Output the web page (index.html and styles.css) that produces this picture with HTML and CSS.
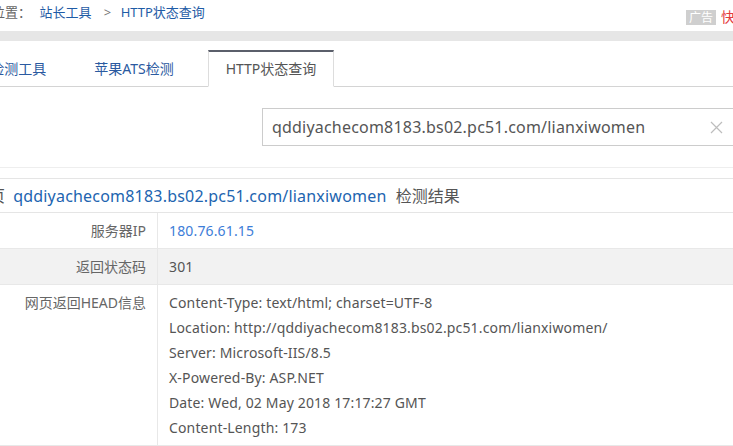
FILE: index.html
```html
<!DOCTYPE html>
<html lang="zh-CN">
<head>
  <meta charset="UTF-8">
  <meta name="viewport" content="width=device-width, initial-scale=1.0">
  <title>HTTP状态查询</title>
  <link rel="stylesheet" href="styles.css">
</head>
<body>
  <div class="wrap">
    <div class="crumb">
      <div class="crumb-left">
        <span class="crumb-label">当前位置：</span>
        <a href="#" class="crumb-link">站长工具</a>
        <span class="crumb-sep">&gt;</span>
        <a href="#" class="crumb-link">HTTP状态查询</a>
      </div>
      <div class="crumb-right">
        <span class="ad">广告</span>
        <a href="#" class="hot">快速通道</a>
      </div>
    </div>
    <div class="band"></div>

    <div class="tabs">
      <a href="#" class="tab">HTTPS检测工具</a>
      <a href="#" class="tab">苹果ATS检测</a>
      <a href="#" class="tab active">HTTP状态查询</a>
    </div>

    <div class="form">
      <div class="search">
        <input type="text" class="search-input" value="qddiyachecom8183.bs02.pc51.com/lianxiwomen">
        <svg class="clear" width="13" height="13" viewBox="0 0 13 13">
          <path d="M1 1 L12 12 M12 1 L1 12" stroke="#bdbdbd" stroke-width="1.2" fill="none"/>
        </svg>
      </div>
    </div>

    <div class="result">
      <div class="result-title">
        网页 <a href="#" class="result-url">qddiyachecom8183.bs02.pc51.com/lianxiwomen</a> 检测结果
      </div>
      <div class="row">
        <div class="cell-label">服务器IP</div>
        <div class="cell-value"><a href="#" class="ip">180.76.61.15</a></div>
      </div>
      <div class="row row-grey">
        <div class="cell-label">返回状态码</div>
        <div class="cell-value">301</div>
      </div>
      <div class="row row-head">
        <div class="cell-label">网页返回HEAD信息</div>
        <div class="cell-value">
          <div>Content-Type: text/html; charset=UTF-8</div>
          <div>Location: http://qddiyachecom8183.bs02.pc51.com/lianxiwomen/</div>
          <div>Server: Microsoft-IIS/8.5</div>
          <div>X-Powered-By: ASP.NET</div>
          <div>Date: Wed, 02 May 2018 17:17:27 GMT</div>
          <div>Content-Length: 173</div>
        </div>
      </div>
    </div>
  </div>
</body>
</html>
```

FILE: styles.css
```css
body {
  margin: 0;
  padding: 0;
  background-color: #fff;
  font-family: "Noto Sans", "Noto Sans CJK SC", sans-serif;
  color: #555;
  overflow: hidden;
}

a {
  text-decoration: none;
}

.wrap {
  width: 877px;
  margin-left: -70px;
}

/* breadcrumb */
.crumb {
  display: flex;
  height: 31px;
  padding-top: 3px;
  box-sizing: border-box;
  font-size: 13px;
  line-height: 18px;
}

.crumb-left {
  padding-left: 36px;
}

.crumb-label {
  color: #666;
  margin-right: 5px;
}

.crumb-link {
  color: #1f5ca6;
}

.crumb-sep {
  color: #777;
  margin: 0 6px 0 9px;
}

.crumb-right {
  margin-left: auto;
  width: 121px;
  display: flex;
  align-items: center;
}

.ad {
  background-color: #cfcfcf;
  color: #fff;
  font-size: 12px;
  line-height: 15px;
  padding: 0 3px;
  margin-right: 5px;
}

.hot {
  color: #e4393c;
  font-size: 14px;
}

.band {
  height: 10px;
  background-color: #e6e6e6;
}

/* tabs */
.tabs {
  display: flex;
  align-items: flex-end;
  gap: 11px;
  height: 45px;
  padding-left: 4px;
  border-bottom: 1px solid #d4d4d4;
}

.tab {
  width: 126px;
  height: 37px;
  line-height: 34px;
  text-align: center;
  font-size: 14px;
  color: #2b5aa0;
  border-top: 2px solid transparent;
  border-left: 1px solid transparent;
  border-right: 1px solid transparent;
  border-bottom: 1px solid transparent;
  margin-bottom: -1px;
  box-sizing: border-box;
}

.tab.active {
  color: #555;
  background-color: #fff;
  border-top-color: #5b5f6b;
  border-left-color: #ddd;
  border-right-color: #ddd;
  border-bottom-color: #fff;
}

/* search form */
.form {
  padding: 21px 0 21px 332px;
  border-bottom: 1px solid #eee;
}

.search {
  width: 480px;
  height: 38px;
  box-sizing: border-box;
  border: 1px solid #ccc;
  display: flex;
  align-items: center;
  padding: 0 18px 0 9px;
}

.search-input {
  flex: 1;
  border: none;
  outline: none;
  padding: 0;
  font-family: inherit;
  font-size: 16px;
  letter-spacing: 0.2px;
  color: #555;
}

.clear {
  flex: none;
}

/* result table */
.result {
  margin-top: 10px;
  border-top: 1px solid #e5e5e5;
}

.result-title {
  height: 33px;
  line-height: 34px;
  padding-left: 43px;
  font-size: 16px;
  color: #555;
  border-bottom: 1px solid #e5e5e5;
}

.result-url {
  color: #2164b0;
  letter-spacing: 0.2px;
  margin: 0 5px 0 4px;
}

.row {
  display: grid;
  grid-template-columns: 228px 1fr;
  border-bottom: 1px solid #e8e8e8;
  font-size: 14px;
}

.row-grey {
  background-color: #f2f2f2;
}

.cell-label {
  text-align: right;
  padding-right: 11px;
  line-height: 35px;
  color: #666;
  border-right: 1px solid #e8e8e8;
}

.cell-value {
  padding-left: 11px;
  line-height: 35px;
  letter-spacing: 0.15px;
}

.ip {
  color: #3d7dd8;
}

.row-head .cell-label,
.row-head .cell-value {
  padding-top: 5px;
  padding-bottom: 5px;
  line-height: 25px;
}
```
